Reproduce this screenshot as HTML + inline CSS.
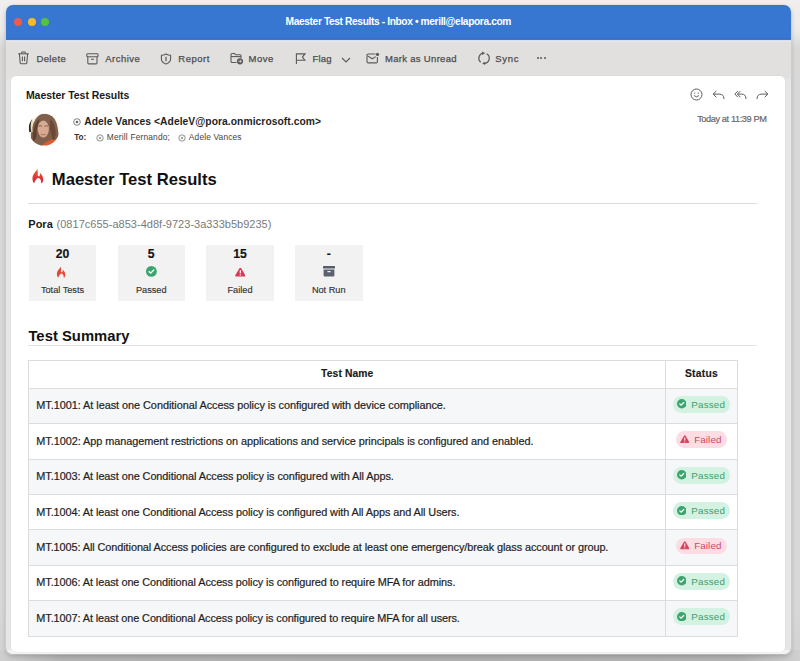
<!DOCTYPE html>
<html><head><meta charset="utf-8"><style>
html,body{margin:0;padding:0;}
body{width:800px;height:661px;position:relative;overflow:hidden;background:#dedede;font-family:"Liberation Sans",sans-serif;}
.abs{position:absolute;}
.t{position:absolute;white-space:pre;}
.dot{width:8px;height:8px;border-radius:50%;}
</style></head><body>
<div class="abs" style="left:0;top:0;width:800px;height:661px;background:linear-gradient(180deg,#f0efed 0px,#ecebea 30px,#d8d8d8 48px,#d8d8d8 600px,#d2d2d2 661px)"></div>
<div class="abs" style="left:0;top:650px;width:800px;height:11px;background:linear-gradient(90deg,#cfcfcf 0px,#b4b4b4 60px,#b0b0b0 400px,#b4b4b4 740px,#d0d0d0 800px)"></div>
<div class="abs" style="left:5px;top:4px;width:787px;height:651px;border-radius:8px;background:rgba(255,255,255,0.7)"></div>
<div class="abs" style="left:6px;top:5px;width:785px;height:649px;border-radius:7px;background:#e7e6e5;box-shadow:0 0 0 0.5px rgba(0,0,0,0.15),0 2px 5px rgba(0,0,0,0.22);overflow:hidden">
  <div class="abs" style="left:0px;top:37px;width:785px;height:40px;background:linear-gradient(180deg,#e1e0de 0px,#e1e0de 34px,#e7e6e5 40px)"></div>
  <div class="abs" style="left:0;top:0;width:785px;height:35px;background:linear-gradient(180deg,#3573cd 0px,#3877d1 3px,#3877d1 33px,#3068c0 34px,#5a7fc4 35px)"></div>
  <div class="abs" style="left:0;top:35px;width:785px;height:2px;background:linear-gradient(180deg,#c8d2e8 0px,#e9ecf3 1px,#e3e3e4 2px)"></div>
  <div class="abs" style="left:0;top:645px;width:785px;height:4px;background:#f3f3f3"></div>
</div>
<div class="abs" style="left:11px;top:76px;width:774px;height:576px;border-radius:5px;background:#fff;box-shadow:0 0 0 0.6px rgba(0,0,0,0.04)"></div>
<!-- rules -->
<div class="abs" style="left:28px;top:202.7px;width:729px;height:1px;background:#dcdcdc"></div>
<div class="abs" style="left:28px;top:345px;width:729px;height:1px;background:#e3e3e3"></div>
<div class="abs" style="left:29px;top:244.6px;width:67px;height:56px;background:#f2f2f2"></div>
<div class="abs" style="left:117.5px;top:244.6px;width:67.5px;height:56px;background:#f2f2f2"></div>
<div class="abs" style="left:206px;top:244.6px;width:68px;height:56px;background:#f2f2f2"></div>
<div class="abs" style="left:295px;top:244.6px;width:67.5px;height:56px;background:#f2f2f2"></div>
<div class="abs" style="left:28.5px;top:360.5px;width:708.8px;height:27.69999999999999px;background:#fff"></div>
<div class="abs" style="left:28.5px;top:388.20px;width:708.8px;height:35.43px;background:#f6f7f9"></div>
<div class="abs" style="left:28.5px;top:423.63px;width:708.8px;height:35.43px;background:#ffffff"></div>
<div class="abs" style="left:28.5px;top:459.06px;width:708.8px;height:35.43px;background:#f6f7f9"></div>
<div class="abs" style="left:28.5px;top:494.49px;width:708.8px;height:35.43px;background:#ffffff"></div>
<div class="abs" style="left:28.5px;top:529.92px;width:708.8px;height:35.43px;background:#f6f7f9"></div>
<div class="abs" style="left:28.5px;top:565.35px;width:708.8px;height:35.43px;background:#ffffff"></div>
<div class="abs" style="left:28.5px;top:600.78px;width:708.8px;height:35.43px;background:#f6f7f9"></div>
<div class="abs" style="left:28.5px;top:360.00px;width:708.8px;height:1px;background:#dcdcdc"></div>
<div class="abs" style="left:28.5px;top:387.70px;width:708.8px;height:1px;background:#dcdcdc"></div>
<div class="abs" style="left:28.5px;top:423.13px;width:708.8px;height:1px;background:#dcdcdc"></div>
<div class="abs" style="left:28.5px;top:458.56px;width:708.8px;height:1px;background:#dcdcdc"></div>
<div class="abs" style="left:28.5px;top:493.99px;width:708.8px;height:1px;background:#dcdcdc"></div>
<div class="abs" style="left:28.5px;top:529.42px;width:708.8px;height:1px;background:#dcdcdc"></div>
<div class="abs" style="left:28.5px;top:564.85px;width:708.8px;height:1px;background:#dcdcdc"></div>
<div class="abs" style="left:28.5px;top:600.28px;width:708.8px;height:1px;background:#dcdcdc"></div>
<div class="abs" style="left:28.5px;top:635.71px;width:708.8px;height:1px;background:#dcdcdc"></div>
<div class="abs" style="left:28.00px;top:360.0px;width:1px;height:276.71px;background:#dcdcdc"></div>
<div class="abs" style="left:665.00px;top:360.0px;width:1px;height:276.71px;background:#dcdcdc"></div>
<div class="abs" style="left:736.80px;top:360.0px;width:1px;height:276.71px;background:#dcdcdc"></div>
<div class="abs" style="left:673.4px;top:395.90px;width:56.6px;height:16.8px;border-radius:8.2px;background:#d3f2e2"></div>
<svg class="abs" style="left:676.6px;top:399.25px" width="9.5" height="9.5" viewBox="0 0 10 10"><circle cx="5" cy="5" r="5" fill="#3da46d"/><path d="M2.9 5.1 L4.4 6.5 L7.1 3.7" fill="none" stroke="#fff" stroke-width="1.3" stroke-linecap="round" stroke-linejoin="round"/></svg>
<div class="abs" style="left:675.8px;top:431.33px;width:51.4px;height:16.8px;border-radius:8.2px;background:#fbdde3"></div>
<svg class="abs" style="left:679.5px;top:434.83px" width="9.6" height="8.5" viewBox="0 0 12 10.5"><path d="M6 0.3 Q6.6 0.3 7 1 L11.7 9 Q12 10 11 10.3 L1 10.3 Q0 10 0.3 9 L5 1 Q5.4 0.3 6 0.3 Z" fill="#d9435f"/><rect x="5.4" y="3" width="1.2" height="4" fill="#fff"/><rect x="5.4" y="8" width="1.2" height="1.2" fill="#fff"/></svg>
<div class="abs" style="left:673.4px;top:466.76px;width:56.6px;height:16.8px;border-radius:8.2px;background:#d3f2e2"></div>
<svg class="abs" style="left:676.6px;top:470.11px" width="9.5" height="9.5" viewBox="0 0 10 10"><circle cx="5" cy="5" r="5" fill="#3da46d"/><path d="M2.9 5.1 L4.4 6.5 L7.1 3.7" fill="none" stroke="#fff" stroke-width="1.3" stroke-linecap="round" stroke-linejoin="round"/></svg>
<div class="abs" style="left:673.4px;top:502.19px;width:56.6px;height:16.8px;border-radius:8.2px;background:#d3f2e2"></div>
<svg class="abs" style="left:676.6px;top:505.54px" width="9.5" height="9.5" viewBox="0 0 10 10"><circle cx="5" cy="5" r="5" fill="#3da46d"/><path d="M2.9 5.1 L4.4 6.5 L7.1 3.7" fill="none" stroke="#fff" stroke-width="1.3" stroke-linecap="round" stroke-linejoin="round"/></svg>
<div class="abs" style="left:675.8px;top:537.62px;width:51.4px;height:16.8px;border-radius:8.2px;background:#fbdde3"></div>
<svg class="abs" style="left:679.5px;top:541.12px" width="9.6" height="8.5" viewBox="0 0 12 10.5"><path d="M6 0.3 Q6.6 0.3 7 1 L11.7 9 Q12 10 11 10.3 L1 10.3 Q0 10 0.3 9 L5 1 Q5.4 0.3 6 0.3 Z" fill="#d9435f"/><rect x="5.4" y="3" width="1.2" height="4" fill="#fff"/><rect x="5.4" y="8" width="1.2" height="1.2" fill="#fff"/></svg>
<div class="abs" style="left:673.4px;top:573.05px;width:56.6px;height:16.8px;border-radius:8.2px;background:#d3f2e2"></div>
<svg class="abs" style="left:676.6px;top:576.40px" width="9.5" height="9.5" viewBox="0 0 10 10"><circle cx="5" cy="5" r="5" fill="#3da46d"/><path d="M2.9 5.1 L4.4 6.5 L7.1 3.7" fill="none" stroke="#fff" stroke-width="1.3" stroke-linecap="round" stroke-linejoin="round"/></svg>
<div class="abs" style="left:673.4px;top:608.48px;width:56.6px;height:16.8px;border-radius:8.2px;background:#d3f2e2"></div>
<svg class="abs" style="left:676.6px;top:611.83px" width="9.5" height="9.5" viewBox="0 0 10 10"><circle cx="5" cy="5" r="5" fill="#3da46d"/><path d="M2.9 5.1 L4.4 6.5 L7.1 3.7" fill="none" stroke="#fff" stroke-width="1.3" stroke-linecap="round" stroke-linejoin="round"/></svg>

<!-- traffic lights -->
<div class="abs dot" style="left:13.6px;top:18.3px;background:#ec5b50"></div>
<div class="abs dot" style="left:27.5px;top:18.3px;background:#f6b928"></div>
<div class="abs dot" style="left:41.2px;top:18.3px;background:#54c43c"></div>
<!-- toolbar icons -->
<svg class="abs" style="left:17px;top:51px" width="13" height="14" viewBox="0 0 13 14" fill="none" stroke="#5a5a5a" stroke-width="1.1">
 <path d="M1.2 2.8 H11.8"/><path d="M4.6 2.6 V1.6 Q4.6 1 5.2 1 H7.8 Q8.4 1 8.4 1.6 V2.6"/>
 <path d="M2.4 3 L3.2 12 Q3.3 12.8 4.1 12.8 H8.9 Q9.7 12.8 9.8 12 L10.6 3"/><path d="M5.4 5.5 V10.2 M7.6 5.5 V10.2"/></svg>
<svg class="abs" style="left:86px;top:53px" width="13" height="12" viewBox="0 0 13 12" fill="none" stroke="#5a5a5a" stroke-width="1.1">
 <rect x="0.8" y="0.8" width="11.2" height="3" rx="0.8"/><path d="M1.8 3.8 V10 Q1.8 10.9 2.7 10.9 H10.1 Q11 10.9 11 10 V3.8"/><path d="M5 6.3 H7.8"/></svg>
<svg class="abs" style="left:160px;top:53px" width="12" height="12" viewBox="0 0 12 12" fill="none" stroke="#5a5a5a" stroke-width="1.1">
 <path d="M6 0.9 Q8.2 2.1 10.6 2.3 V5.9 Q10.6 9.2 6 11 Q1.4 9.2 1.4 5.9 V2.3 Q3.8 2.1 6 0.9 Z"/><path d="M6 3.7 V8.2" stroke-width="1.2"/></svg>
<svg class="abs" style="left:230px;top:52px" width="14" height="13" viewBox="0 0 14 13" fill="none" stroke="#5a5a5a" stroke-width="1.1">
 <path d="M6.5 10.5 H2 Q1 10.5 1 9.5 V2.5 Q1 1.5 2 1.5 H4.5 L5.8 2.8 H10 Q11 2.8 11 3.8 V6"/><path d="M1 4.6 H11"/>
 <circle cx="10" cy="9.3" r="3.1" fill="#5a5a5a" stroke="none"/><path d="M8.4 9.3 H11.3 M10.2 8.2 L11.3 9.3 L10.2 10.4" stroke="#e1e0de" stroke-width="0.9"/></svg>
<svg class="abs" style="left:295px;top:53px" width="11" height="12" viewBox="0 0 11 12" fill="none" stroke="#5a5a5a" stroke-width="1.1">
 <path d="M1.4 11 V0.9 H9.9 L7.4 4.1 L9.9 7.3 H1.4"/></svg>
<svg class="abs" style="left:341px;top:56.5px" width="10" height="6" viewBox="0 0 10 6" fill="none" stroke="#5a5a5a" stroke-width="1.1">
 <path d="M1 1 L5 5 L9 1"/></svg>
<svg class="abs" style="left:366px;top:51.5px" width="14" height="12" viewBox="0 0 14 12" fill="none" stroke="#5a5a5a" stroke-width="1.1">
 <path d="M9.5 2 H2.2 Q1 2 1 3.2 V9.8 Q1 10.9 2.2 10.9 H10.3 Q11.4 10.9 11.4 9.8 V5"/><path d="M1.6 3.9 L6.2 6.8 L9.8 4.6"/>
 <circle cx="11.5" cy="2.4" r="1.6" fill="#5a5a5a" stroke="none"/></svg>
<svg class="abs" style="left:476.5px;top:51px" width="14" height="15" viewBox="0 0 14 15" fill="none" stroke="#5a5a5a" stroke-width="1.2">
 <path d="M6.1 2.1 A5.2 5.2 0 0 0 3.7 11.2"/><path d="M9.6 2.7 A5.2 5.2 0 0 1 6.6 12.4"/>
 <path d="M5.1 0.5 L8.2 2.2 L5.1 3.9 Z" fill="#5a5a5a" stroke="none"/><path d="M8.1 10.7 L5.1 12.4 L8.1 14.1 Z" fill="#5a5a5a" stroke="none"/></svg>
<div class="abs" style="left:536.5px;top:56.8px;width:2px;height:2px;border-radius:1px;background:#5a5a5a"></div>
<div class="abs" style="left:540px;top:56.8px;width:2px;height:2px;border-radius:1px;background:#5a5a5a"></div>
<div class="abs" style="left:543.5px;top:56.8px;width:2px;height:2px;border-radius:1px;background:#5a5a5a"></div>
<!-- header icons -->
<svg class="abs" style="left:689.5px;top:88px" width="13" height="13" viewBox="0 0 13 13" fill="none" stroke="#5c5c5c" stroke-width="1">
 <circle cx="6.5" cy="6.5" r="5.5"/><circle cx="4.7" cy="5.1" r="0.65" fill="#5c5c5c" stroke="none"/><circle cx="8.3" cy="5.1" r="0.65" fill="#5c5c5c" stroke="none"/><path d="M4.1 7.6 Q6.5 10 8.9 7.6"/></svg>
<svg class="abs" style="left:711.5px;top:89.5px" width="13" height="10" viewBox="0 0 13 10" fill="none" stroke="#5c5c5c" stroke-width="1">
 <path d="M4.3 1 L1.1 4.1 L4.3 7.2"/><path d="M1.3 4.1 H7.2 Q12 4.1 12 9"/></svg>
<svg class="abs" style="left:734px;top:89.5px" width="13" height="10" viewBox="0 0 13 10" fill="none" stroke="#5c5c5c" stroke-width="1">
 <path d="M3.9 1 L0.9 4.1 L3.9 7.2"/><path d="M6.4 1 L3.4 4.1 L6.4 7.2"/><path d="M3.6 4.1 H7.6 Q12 4.1 12 9"/></svg>
<svg class="abs" style="left:756px;top:89.5px" width="13" height="10" viewBox="0 0 13 10" fill="none" stroke="#5c5c5c" stroke-width="1">
 <path d="M8.7 1 L11.9 4.1 L8.7 7.2"/><path d="M11.7 4.1 H5.8 Q1 4.1 1 9"/></svg>
<!-- recipient circles -->
<svg class="abs" style="left:73px;top:118.3px" width="8" height="8" viewBox="0 0 8 8"><circle cx="4" cy="4" r="3.3" fill="none" stroke="#666" stroke-width="0.8"/><circle cx="4" cy="4" r="1.3" fill="#666"/></svg>
<svg class="abs" style="left:96px;top:134px" width="8" height="8" viewBox="0 0 8 8"><circle cx="4" cy="4" r="3.2" fill="none" stroke="#777" stroke-width="0.8"/><path d="M2.7 2.7 L5.3 5.3 M5.3 2.7 L2.7 5.3" stroke="#777" stroke-width="0.7"/></svg>
<svg class="abs" style="left:177.8px;top:134px" width="8" height="8" viewBox="0 0 8 8"><circle cx="4" cy="4" r="3.2" fill="none" stroke="#777" stroke-width="0.8"/><path d="M2.7 2.7 L5.3 5.3 M5.3 2.7 L2.7 5.3" stroke="#777" stroke-width="0.7"/></svg>
<!-- avatar -->
<svg class="abs" style="left:27.5px;top:113px" width="32" height="33" viewBox="0 0 32 33">
 <defs><clipPath id="av"><ellipse cx="16" cy="16.5" rx="15.5" ry="16.1"/></clipPath>
 <filter id="bl" x="-20%" y="-20%" width="140%" height="140%"><feGaussianBlur stdDeviation="0.5"/></filter></defs>
 <g clip-path="url(#av)"><g filter="url(#bl)">
  <rect x="-2" y="-2" width="36" height="37" fill="#f7f3ee"/>
  <path d="M3.5 34 Q1.5 20 5.5 10 Q9.5 0.5 17 0.8 Q25.5 1.2 28.5 10 Q31.5 20 30.5 34 Z" fill="#80604c"/>
  <path d="M5 30 Q4 20 7 12 Q9 7 12 6 Q8 14 8.5 24 Z" fill="#5d4030"/>
  <path d="M22 6 Q27 10 27.5 18 Q28 26 25 31 Q24 22 22 16 Z" fill="#6a4a38"/>
  <ellipse cx="15.3" cy="16" rx="5.6" ry="8.6" fill="#d8aa92"/>
  <path d="M10.5 13.2 Q12.5 12.2 14 13.2 M16.5 13.2 Q18.5 12.2 20 13.4" stroke="#7a5444" stroke-width="0.9" fill="none"/>
  <path d="M12.8 21.3 Q15.3 22.6 17.8 21.3" stroke="#b0685a" stroke-width="0.9" fill="none"/>
  <path d="M14 33 Q19 27 25 26.5 Q30 26.5 33 30 L33 34 Z" fill="#df5a33"/>
  <path d="M3.2 6 Q1 12 2.2 19" stroke="#2e251d" stroke-width="1.8" fill="none"/>
  <path d="M4.6 7.5 Q3.2 13 4 19" stroke="#e9dcae" stroke-width="1.1" fill="none"/>
 </g></g></svg>
<!-- h1 flame -->
<svg class="abs" style="left:30px;top:167px" width="16" height="19" viewBox="0 0 16 19">
 <defs><linearGradient id="fg" x1="0" y1="0" x2="0" y2="1"><stop offset="0" stop-color="#ef6a35"/><stop offset="0.5" stop-color="#e23b35"/><stop offset="1" stop-color="#c22a3a"/></linearGradient></defs>
 <path d="M4 16.5 C2 14 1.8 10 3.8 6.8 C5 5 6.8 3.5 7.3 2.1 C8 4.5 8 6.5 7.6 8.3 C8.2 9.2 8.8 9.6 9.3 9.3 C9.8 8.6 10 7.2 10 6 C12.4 8 13.5 11 13.2 13.6 C13 15 12.2 16 11.2 16.6 C11.4 14.8 10.9 12.8 9.6 11.6 C8.9 11 8 10.8 7.4 11.2 C6 12.2 5 14 4 16.5 Z" fill="url(#fg)"/></svg>
<!-- stat icons -->
<svg class="abs" style="left:55.2px;top:264.6px" width="12.48" height="14.82" viewBox="0 0 16 19">
 <path d="M4 16.5 C2 14 1.8 10 3.8 6.8 C5 5 6.8 3.5 7.3 2.1 C8 4.5 8 6.5 7.6 8.3 C8.2 9.2 8.8 9.6 9.3 9.3 C9.8 8.6 10 7.2 10 6 C12.4 8 13.5 11 13.2 13.6 C13 15 12.2 16 11.2 16.6 C11.4 14.8 10.9 12.8 9.6 11.6 C8.9 11 8 10.8 7.4 11.2 C6 12.2 5 14 4 16.5 Z" fill="#e04a3c"/></svg>
<svg class="abs" style="left:145.9px;top:266.3px" width="10.8" height="10.8" viewBox="0 0 10 10"><circle cx="5" cy="5" r="5" fill="#37a56c"/><path d="M2.9 5.2 L4.4 6.6 L7.2 3.8" fill="none" stroke="#fff" stroke-width="1.3" stroke-linecap="round" stroke-linejoin="round"/></svg>
<svg class="abs" style="left:234.8px;top:266.7px" width="10.6" height="10.1" viewBox="0 0 12 10.5"><path d="M6 0.3 Q6.6 0.3 7 1 L11.7 9 Q12 10 11 10.3 L1 10.3 Q0 10 0.3 9 L5 1 Q5.4 0.3 6 0.3 Z" fill="#d93a58"/><rect x="5.35" y="3.1" width="1.3" height="3.5" fill="#fff"/><rect x="5.35" y="7.7" width="1.3" height="1.3" fill="#fff"/></svg>
<svg class="abs" style="left:322.6px;top:266.4px" width="12" height="10.5" viewBox="0 0 12 10.5"><rect x="0" y="0" width="12" height="2.6" rx="0.7" fill="#555b67"/><path d="M0.6 3.5 H11.4 V9.3 Q11.4 10.5 10.2 10.5 H1.8 Q0.6 10.5 0.6 9.3 Z" fill="#5b616d"/><rect x="4.3" y="5.1" width="3.4" height="1.2" rx="0.6" fill="#f2f2f2"/></svg>

<div class="t" style="left:285.59px;top:17.37px;font-size:10.2px;line-height:10.2px;font-weight:bold;color:#ffffff;letter-spacing:-0.373px;">Maester Test Results - Inbox • merill@elapora.com</div>
<div class="t" style="left:36.42px;top:54.26px;font-size:9.5px;line-height:9.5px;font-weight:normal;color:#4d4d4d;letter-spacing:0.398px;-webkit-text-stroke:0.25px #4d4d4d;">Delete</div>
<div class="t" style="left:105.22px;top:54.26px;font-size:9.5px;line-height:9.5px;font-weight:normal;color:#4d4d4d;letter-spacing:0.479px;-webkit-text-stroke:0.25px #4d4d4d;">Archive</div>
<div class="t" style="left:178.32px;top:54.26px;font-size:9.5px;line-height:9.5px;font-weight:normal;color:#4d4d4d;letter-spacing:0.509px;-webkit-text-stroke:0.25px #4d4d4d;">Report</div>
<div class="t" style="left:248.62px;top:54.26px;font-size:9.5px;line-height:9.5px;font-weight:normal;color:#4d4d4d;letter-spacing:0.442px;-webkit-text-stroke:0.25px #4d4d4d;">Move</div>
<div class="t" style="left:312.62px;top:54.26px;font-size:9.5px;line-height:9.5px;font-weight:normal;color:#4d4d4d;letter-spacing:0.175px;-webkit-text-stroke:0.25px #4d4d4d;">Flag</div>
<div class="t" style="left:384.92px;top:54.26px;font-size:9.5px;line-height:9.5px;font-weight:normal;color:#4d4d4d;letter-spacing:0.317px;-webkit-text-stroke:0.25px #4d4d4d;">Mark as Unread</div>
<div class="t" style="left:495.22px;top:54.26px;font-size:9.5px;line-height:9.5px;font-weight:normal;color:#4d4d4d;letter-spacing:0.712px;-webkit-text-stroke:0.25px #4d4d4d;">Sync</div>
<div class="t" style="left:25.88px;top:89.61px;font-size:10.5px;line-height:10.5px;font-weight:bold;color:#1a1a1a;letter-spacing:-0.038px;">Maester Test Results</div>
<div class="t" style="left:84.19px;top:117.48px;font-size:10.3px;line-height:10.3px;font-weight:bold;color:#1f1f1f;letter-spacing:0.046px;">Adele Vances &lt;AdeleV@pora.onmicrosoft.com&gt;</div>
<div class="t" style="left:74.17px;top:133.76px;font-size:8.2px;line-height:8.2px;font-weight:bold;color:#333;letter-spacing:0.016px;">To:</div>
<div class="t" style="left:106.86px;top:133.09px;font-size:8.4px;line-height:8.4px;font-weight:normal;color:#444;letter-spacing:0.170px;">Merill Fernando;</div>
<div class="t" style="left:188.86px;top:133.09px;font-size:8.4px;line-height:8.4px;font-weight:normal;color:#444;letter-spacing:0.146px;">Adele Vances</div>
<div class="t" style="left:697.13px;top:114.81px;font-size:9.2px;line-height:9.2px;font-weight:normal;color:#686868;letter-spacing:-0.388px;-webkit-text-stroke:0.2px #686868;">Today at 11:39 PM</div>
<div class="t" style="left:51.84px;top:172.05px;font-size:16.6px;line-height:16.6px;font-weight:bold;color:#111;letter-spacing:0.002px;">Maester Test Results</div>
<div class="t" style="left:28.31px;top:219.19px;font-size:11px;line-height:11px;font-weight:bold;color:#1a1a1a;letter-spacing:0.000px;">Pora</div>
<div class="t" style="left:56.56px;top:219.19px;font-size:11px;line-height:11px;font-weight:normal;color:#7a7a7a;letter-spacing:0.022px;">(0817c655-a853-4d8f-9723-3a333b5b9235)</div>
<div class="t" style="left:55.72px;top:248.17px;font-size:12.2px;line-height:12.2px;font-weight:bold;color:#111;letter-spacing:0.000px;-webkit-text-stroke:0.15px #111;">20</div>
<div class="t" style="left:40.88px;top:286.21px;font-size:9.2px;line-height:9.2px;font-weight:normal;color:#333;letter-spacing:0.000px;-webkit-text-stroke:0.15px #333;">Total Tests</div>
<div class="t" style="left:147.86px;top:248.17px;font-size:12.2px;line-height:12.2px;font-weight:bold;color:#111;letter-spacing:0.000px;-webkit-text-stroke:0.15px #111;">5</div>
<div class="t" style="left:135.92px;top:286.21px;font-size:9.2px;line-height:9.2px;font-weight:normal;color:#333;letter-spacing:0.000px;-webkit-text-stroke:0.15px #333;">Passed</div>
<div class="t" style="left:233.22px;top:248.17px;font-size:12.2px;line-height:12.2px;font-weight:bold;color:#111;letter-spacing:0.000px;-webkit-text-stroke:0.15px #111;">15</div>
<div class="t" style="left:227.48px;top:286.21px;font-size:9.2px;line-height:9.2px;font-weight:normal;color:#333;letter-spacing:0.000px;-webkit-text-stroke:0.15px #333;">Failed</div>
<div class="t" style="left:326.72px;top:248.17px;font-size:12.2px;line-height:12.2px;font-weight:bold;color:#111;letter-spacing:0.000px;-webkit-text-stroke:0.15px #111;">-</div>
<div class="t" style="left:311.89px;top:286.21px;font-size:9.2px;line-height:9.2px;font-weight:normal;color:#333;letter-spacing:0.000px;-webkit-text-stroke:0.15px #333;">Not Run</div>
<div class="t" style="left:28.41px;top:329.07px;font-size:14.8px;line-height:14.8px;font-weight:bold;color:#111;letter-spacing:0.027px;">Test Summary</div>
<div class="t" style="left:321.04px;top:369.18px;font-size:10.3px;line-height:10.3px;font-weight:bold;color:#1a1a1a;letter-spacing:0.124px;-webkit-text-stroke:0.15px #1a1a1a;">Test Name</div>
<div class="t" style="left:684.89px;top:368.98px;font-size:10.3px;line-height:10.3px;font-weight:bold;color:#1a1a1a;letter-spacing:0.268px;-webkit-text-stroke:0.15px #1a1a1a;">Status</div>
<div class="t" style="left:36.31px;top:400.27px;font-size:10.9px;line-height:10.9px;font-weight:normal;color:#1e1e1e;letter-spacing:-0.046px;-webkit-text-stroke:0.2px #1e1e1e;">MT.1001: At least one Conditional Access policy is configured with device compliance.</div>
<div class="t" style="left:691.31px;top:399.70px;font-size:9.8px;line-height:9.8px;font-weight:normal;color:#3f9d6b;letter-spacing:0.179px;">Passed</div>
<div class="t" style="left:36.31px;top:435.70px;font-size:10.9px;line-height:10.9px;font-weight:normal;color:#1e1e1e;letter-spacing:-0.059px;-webkit-text-stroke:0.2px #1e1e1e;">MT.1002: App management restrictions on applications and service principals is configured and enabled.</div>
<div class="t" style="left:694.21px;top:435.13px;font-size:9.8px;line-height:9.8px;font-weight:normal;color:#c94a62;letter-spacing:0.099px;">Failed</div>
<div class="t" style="left:36.31px;top:471.13px;font-size:10.9px;line-height:10.9px;font-weight:normal;color:#1e1e1e;letter-spacing:-0.067px;-webkit-text-stroke:0.2px #1e1e1e;">MT.1003: At least one Conditional Access policy is configured with All Apps.</div>
<div class="t" style="left:691.31px;top:470.56px;font-size:9.8px;line-height:9.8px;font-weight:normal;color:#3f9d6b;letter-spacing:0.179px;">Passed</div>
<div class="t" style="left:36.31px;top:506.56px;font-size:10.9px;line-height:10.9px;font-weight:normal;color:#1e1e1e;letter-spacing:-0.075px;-webkit-text-stroke:0.2px #1e1e1e;">MT.1004: At least one Conditional Access policy is configured with All Apps and All Users.</div>
<div class="t" style="left:691.31px;top:505.99px;font-size:9.8px;line-height:9.8px;font-weight:normal;color:#3f9d6b;letter-spacing:0.179px;">Passed</div>
<div class="t" style="left:36.31px;top:541.99px;font-size:10.9px;line-height:10.9px;font-weight:normal;color:#1e1e1e;letter-spacing:-0.082px;-webkit-text-stroke:0.2px #1e1e1e;">MT.1005: All Conditional Access policies are configured to exclude at least one emergency/break glass account or group.</div>
<div class="t" style="left:694.21px;top:541.42px;font-size:9.8px;line-height:9.8px;font-weight:normal;color:#c94a62;letter-spacing:0.099px;">Failed</div>
<div class="t" style="left:36.31px;top:577.42px;font-size:10.9px;line-height:10.9px;font-weight:normal;color:#1e1e1e;letter-spacing:-0.081px;-webkit-text-stroke:0.2px #1e1e1e;">MT.1006: At least one Conditional Access policy is configured to require MFA for admins.</div>
<div class="t" style="left:691.31px;top:576.85px;font-size:9.8px;line-height:9.8px;font-weight:normal;color:#3f9d6b;letter-spacing:0.179px;">Passed</div>
<div class="t" style="left:36.31px;top:612.85px;font-size:10.9px;line-height:10.9px;font-weight:normal;color:#1e1e1e;letter-spacing:-0.089px;-webkit-text-stroke:0.2px #1e1e1e;">MT.1007: At least one Conditional Access policy is configured to require MFA for all users.</div>
<div class="t" style="left:691.31px;top:612.28px;font-size:9.8px;line-height:9.8px;font-weight:normal;color:#3f9d6b;letter-spacing:0.179px;">Passed</div>
</body></html>
